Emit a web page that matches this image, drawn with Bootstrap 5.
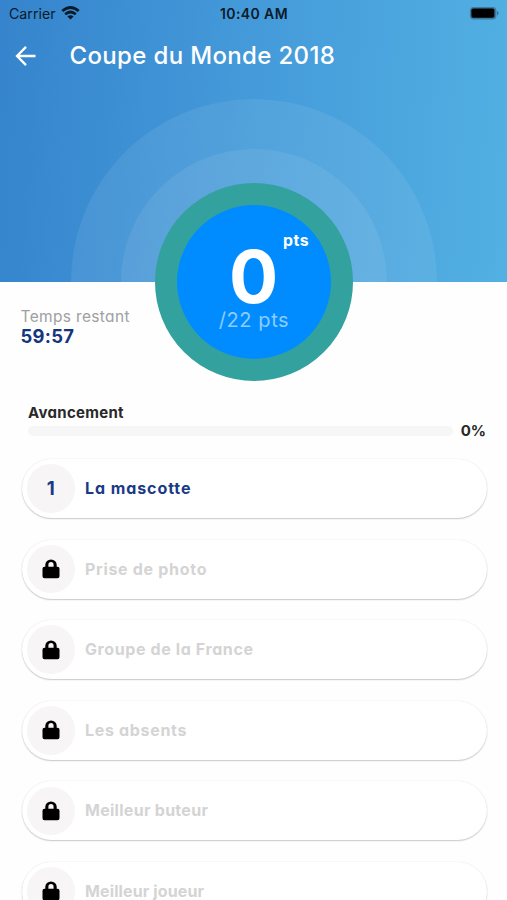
<!DOCTYPE html>
<html lang="fr">
<head>
<meta charset="utf-8">
<meta name="viewport" content="width=device-width, initial-scale=1">
<title>Coupe du Monde 2018</title>
<link href="https://cdn.jsdelivr.net/npm/bootstrap@5.3.0/dist/css/bootstrap.min.css" rel="stylesheet">
<style>
  body { font-family: Inter, "Liberation Sans", sans-serif; font-feature-settings: "cv11"; background: #fefefe; line-height: 1; height: 900px; }
  .hero { height: 282px; background: linear-gradient(94deg, #3584cd 0%, #459bda 50%, #52b0e2 100%); }
  .status { height: 27px; padding: 0 8px 0 9px; font-size: 14.2px; color: #0b1a29; font-feature-settings: normal; }
  .status > div { padding-top: 1px; }
  .status svg { overflow: visible; }
  .clock { font-weight: 600; font-size: 14px; letter-spacing: .4px; }
  .topbar { height: 58px; padding-left: 15px; font-feature-settings: normal; }
  .topbar h1 { font-size: 24px; font-weight: 500; margin-left: 32.5px; letter-spacing: .35px; padding-top: 1px; }
  .halo { left: 50%; border-radius: 50%; transform: translate(-50%, -50%); top: 281.5px; margin-left: .5px; }
  .halo-lg { width: 366px; height: 366px; background: rgba(255,255,255,.075); }
  .halo-md { width: 266px; height: 266px; background: rgba(255,255,255,.075); }
  .score { width: 198px; height: 198px; background: #008cff; border: 22px solid #33a29e; }
  .score-value { font-size: 73px; line-height: 57px; font-weight: 700; padding-top: 43.5px; height: 107.5px; margin-left: -1px; }
  .score-unit { font-size: 15.8px; font-weight: 700; left: 106px; top: 28px; letter-spacing: .5px; }
  .score-max { font-size: 20px; line-height: 16px; color: #8dccff; letter-spacing: .6px; }
  .timer { height: 119px; padding: 27px 0 0 20.5px; }
  .timer-label { font-size: 15.5px; line-height: 15px; color: #a0a0a0; letter-spacing: .34px; }
  .timer-value { font-size: 18.4px; font-weight: 700; color: #14357f; margin-top: 3px; letter-spacing: .3px; }
  .advance { padding: 4px 21px 0 28px; height: 58px; color: #292929; font-weight: 700; }
  .advance-title { font-size: 15px; line-height: 15px; letter-spacing: .3px; margin-bottom: 3px; }
  .advance .progress { height: 10px; background: #f6f6f6; border-radius: 5px; }
  .advance-pct { font-size: 15px; width: 33px; text-align: right; }
  .steps { padding: 0 20.5px 0 21.5px; gap: 21.6px; }
  .step { height: 59px; flex: none; border-radius: 30px; background: #fff; padding: 0 0 0 5px; color: #d4d4d4; font-size: 16px; font-weight: 700; box-shadow: 0 1px 1.5px rgba(0,0,0,.2), 0 0 1.5px rgba(0,0,0,.1); }
  .step > span { letter-spacing: .6px; padding-bottom: 1px; }
  .step-open { color: #1a3a85; }
  .step-open > span { letter-spacing: .92px; padding-bottom: 2px; }
  .step:nth-child(2) > span { letter-spacing: .7px; }
  .step:nth-child(4) > span { letter-spacing: .68px; }
  .step:nth-child(5) > span { letter-spacing: .28px; }
  .step:nth-child(6) > span { letter-spacing: .12px; }
  .bubble { width: 48.5px; height: 48.5px; background: #f7f5f6; margin-right: 10px; }
  .bubble-num { font-size: 18.5px; }
</style>
<script src="https://cdn.jsdelivr.net/npm/bootstrap@5.3.0/dist/js/bootstrap.bundle.min.js"></script>
</head>
<body class="overflow-hidden position-relative">
<svg class="d-none"><symbol id="lock" viewBox="0 0 18 20"><path d="M2.500 7.700H3.300V5.800a5.700 5.400 0 0 1 11.400 0V7.700H15.500A2 2 0 0 1 17.500 9.700V17.300A2 2 0 0 1 15.500 19.300H2.500A2 2 0 0 1 .5 17.300V9.700A2 2 0 0 1 2.500 7.700ZM6.400 7.700H11.600V5.700a2.600 2.600 0 0 0-5.200 0Z" fill="#000" fill-rule="evenodd"/></symbol></svg>

<header class="hero position-relative overflow-hidden">
  <div class="halo halo-lg position-absolute"></div>
  <div class="halo halo-md position-absolute"></div>
  <div class="status row g-0 align-items-center">
    <div class="col d-flex align-items-center">
      <span>Carrier</span>
      <svg class="ms-1" width="21" height="14" viewBox="-1.500 .8 21 14" fill="none" stroke="#0b1a29" stroke-width="2.700"><path d="M.8 4.800Q9-2.200 17.200 4.800M3.700 8Q9 3.600 14.300 8"/><path d="M5.900 10.200Q9 7.800 12.100 10.200L9 13.400Z" fill="#0b1a29" stroke="none"/></svg>
    </div>
    <div class="col-auto clock">10:40 AM</div>
    <div class="col d-flex justify-content-end">
      <svg width="31" height="14" viewBox="-1.200 .8 31 14"><rect x=".7" y=".7" width="26.500" height="12.600" rx="3.800" fill="#3a7ba0"/><rect x="2.200" y="2.300" width="23" height="9.200" rx="1.800" fill="#000"/><path d="M28 4.600q2.600 2.400 0 4.800Z" fill="#2b6487"/></svg>
    </div>
  </div>
  <div class="topbar d-flex align-items-center text-white">
    <svg width="22" height="22" viewBox="0 0 22 22" fill="none" stroke="#fff" stroke-width="2.300"><path d="M20.500 11H2.500M11 1.900 2 11l9 9.100"/></svg>
    <h1 class="mb-0">Coupe du Monde 2018</h1>
  </div>
</header>

<div class="halo score position-absolute text-center">
  <div class="score-value text-white">0</div>
  <div class="score-unit position-absolute text-white">pts</div>
  <div class="score-max">/22 pts</div>
</div>

<main>
  <section class="timer">
    <div class="timer-label">Temps restant</div>
    <div class="timer-value">59:57</div>
  </section>
  <section class="advance">
    <div class="advance-title">Avancement</div>
    <div class="d-flex align-items-center">
      <div class="progress flex-grow-1"><div class="progress-bar" style="width:0%"></div></div>
      <div class="advance-pct">0%</div>
    </div>
  </section>
  <section class="steps d-flex flex-column">
    <div class="step step-open d-flex align-items-center"><div class="bubble bubble-num rounded-circle d-flex align-items-center justify-content-center">1</div><span>La mascotte</span></div>
    <div class="step d-flex align-items-center"><div class="bubble rounded-circle d-flex align-items-center justify-content-center"><svg width="18" height="20"><use href="#lock"/></svg></div><span>Prise de photo</span></div>
    <div class="step d-flex align-items-center"><div class="bubble rounded-circle d-flex align-items-center justify-content-center"><svg width="18" height="20"><use href="#lock"/></svg></div><span>Groupe de la France</span></div>
    <div class="step d-flex align-items-center"><div class="bubble rounded-circle d-flex align-items-center justify-content-center"><svg width="18" height="20"><use href="#lock"/></svg></div><span>Les absents</span></div>
    <div class="step d-flex align-items-center"><div class="bubble rounded-circle d-flex align-items-center justify-content-center"><svg width="18" height="20"><use href="#lock"/></svg></div><span>Meilleur buteur</span></div>
    <div class="step d-flex align-items-center"><div class="bubble rounded-circle d-flex align-items-center justify-content-center"><svg width="18" height="20"><use href="#lock"/></svg></div><span>Meilleur joueur</span></div>
  </section>
</main>
</body>
</html>
